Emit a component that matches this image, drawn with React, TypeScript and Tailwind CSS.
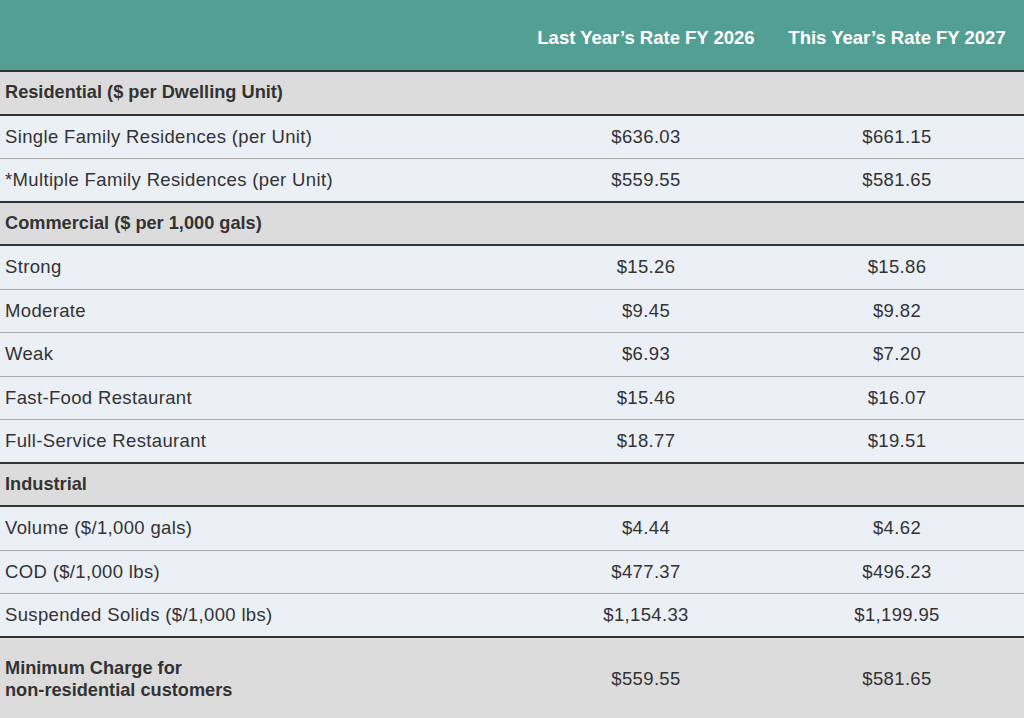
const rows: { kind: "section" | "item"; label: string; last?: string; next?: string; dark?: boolean }[] = [
  { kind: "section", label: "Residential ($ per Dwelling Unit)" },
  { kind: "item", label: "Single Family Residences (per Unit)", last: "$636.03", next: "$661.15" },
  { kind: "item", label: "*Multiple Family Residences (per Unit)", last: "$559.55", next: "$581.65", dark: true },
  { kind: "section", label: "Commercial ($ per 1,000 gals)" },
  { kind: "item", label: "Strong", last: "$15.26", next: "$15.86" },
  { kind: "item", label: "Moderate", last: "$9.45", next: "$9.82" },
  { kind: "item", label: "Weak", last: "$6.93", next: "$7.20" },
  { kind: "item", label: "Fast-Food Restaurant", last: "$15.46", next: "$16.07" },
  { kind: "item", label: "Full-Service Restaurant", last: "$18.77", next: "$19.51", dark: true },
  { kind: "section", label: "Industrial" },
  { kind: "item", label: "Volume ($/1,000 gals)", last: "$4.44", next: "$4.62" },
  { kind: "item", label: "COD ($/1,000 lbs)", last: "$477.37", next: "$496.23" },
  { kind: "item", label: "Suspended Solids ($/1,000 lbs)", last: "$1,154.33", next: "$1,199.95", dark: true },
];

export default function App() {
  return (
    <div className="w-[1024px] h-[718px] overflow-hidden bg-[#dcdcdd] text-[#333333] font-['Liberation_Sans',Arial,sans-serif]">
      {/* Header */}
      <div className="flex h-[72px] items-center bg-[#539f93] border-b-2 border-[#2e3432] text-white font-bold text-[18.5px]">
        <div className="w-[520px]" />
        <div className="w-[252px] text-center pt-[6px]">Last Year’s Rate FY 2026</div>
        <div className="w-[250px] text-center pt-[6px]">This Year’s Rate FY 2027</div>
      </div>

      {rows.map((r) =>
        r.kind === "section" ? (
          <div
            key={r.label}
            className="flex h-[43.5px] items-center bg-[#dcdcdd] border-b-2 border-[#333333] pl-[5px] font-bold text-[18.2px]"
          >
            {r.label}
          </div>
        ) : (
          <div
            key={r.label}
            className={
              r.dark
                ? "flex h-[43.5px] items-center bg-[#ebeff6] border-b-2 border-[#333333] text-[18.5px] tracking-[0.35px]"
                : "flex h-[43.5px] items-center bg-[#ebeff6] border-b-[1.5px] border-[#a9a9a9] text-[18.5px] tracking-[0.35px]"
            }
          >
            <div className="w-[520px] pl-[5px]">{r.label}</div>
            <div className="w-[252px] text-center">{r.last}</div>
            <div className="w-[250px] text-center">{r.next}</div>
          </div>
        )
      )}

      {/* Minimum charge */}
      <div className="flex h-[82px] items-center bg-[#dcdcdd]">
        <div className="w-[520px] pl-[5px] font-bold text-[18.2px] leading-[22px]">
          Minimum Charge for
          <br />
          non-residential customers
        </div>
        <div className="w-[252px] text-center text-[18.5px] tracking-[0.35px]">$559.55</div>
        <div className="w-[250px] text-center text-[18.5px] tracking-[0.35px]">$581.65</div>
      </div>
    </div>
  );
}
